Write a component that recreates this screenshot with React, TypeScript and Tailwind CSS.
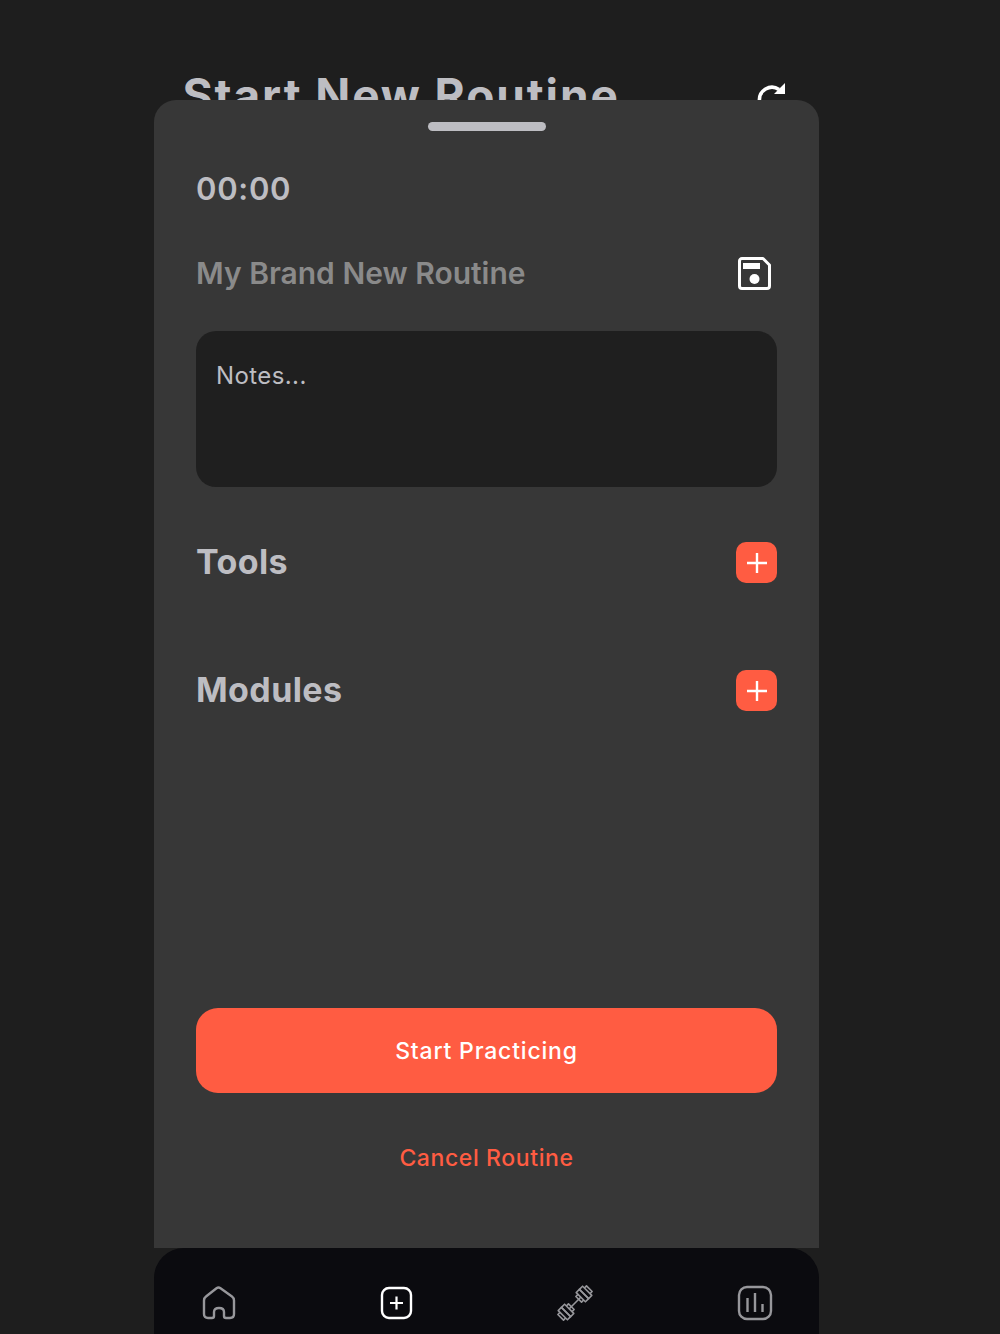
function RefreshIcon() {
  return (
    <svg width="34" height="34" viewBox="0 0 34 34" fill="none">
      <path d="M5.500 21A12.500 12.500 0 0 1 25 9.500" stroke="white" strokeWidth="3.600" />
      <path d="M31 3v11H20Z" fill="white" />
    </svg>
  );
}

function SaveIcon() {
  return (
    <svg width="35" height="35" viewBox="0 0 35 35" fill="none">
      <path d="M5 2.500h21l6.500 6.500v21a2.500 2.500 0 0 1-2.500 2.500H5A2.500 2.500 0 0 1 2.500 30V5A2.500 2.500 0 0 1 5 2.500Z" stroke="white" strokeWidth="3" strokeLinejoin="round" />
      <rect x="6" y="7" width="17" height="6" fill="white" />
      <circle cx="17.500" cy="23" r="5" fill="white" />
    </svg>
  );
}

function HomeIcon() {
  return (
    <svg width="36" height="36" viewBox="0 0 36 36" fill="none" stroke="#97979b" strokeWidth="2.400">
      <path d="M15.500 3.200Q17.500 1.800 19.500 3.200L31 11.500Q33 13 33 15.500V29Q33 33 29 33H25Q23 33 23 31V27Q23 23 18 23Q13 23 13 27V31Q13 33 11 33H7Q3 33 3 29V15.500Q3 13 5 11.500Z" strokeLinejoin="round" />
    </svg>
  );
}

function PlusSquareIcon() {
  return (
    <svg width="34" height="34" viewBox="0 0 34 34" fill="none" stroke="white">
      <rect x="3" y="2" width="29" height="30" rx="7" strokeWidth="2.400" />
      <path d="M17.500 10.500v13M11 17h13" strokeWidth="2.200" />
    </svg>
  );
}

function BarbellIcon() {
  return (
    <svg width="38" height="38" viewBox="0 0 38 38" fill="none" stroke="#97979b" strokeWidth="1.600" strokeLinejoin="round">
      <path d="M13 25 L25 13" />
      <g transform="rotate(45 28 10)">
        <rect x="21.500" y="5.500" width="13" height="4.500" />
        <rect x="21.500" y="10" width="13" height="4.500" />
        <path d="M24 5.500v-3h8v3M24 14.500v3h8v-3" />
      </g>
      <g transform="rotate(45 10 28)">
        <rect x="3.500" y="23.500" width="13" height="4.500" />
        <rect x="3.500" y="28" width="13" height="4.500" />
        <path d="M6 23.500v-3h8v3M6 32.500v3h8v-3" />
      </g>
    </svg>
  );
}

function ChartIcon() {
  return (
    <svg width="36" height="36" viewBox="0 0 36 36" fill="none" stroke="#97979b">
      <rect x="2" y="2" width="32" height="32" rx="8" strokeWidth="2.400" />
      <path d="M10.500 27V13M18 27V8M25.500 27v-8" strokeWidth="2.400" />
    </svg>
  );
}

function AddButton() {
  return (
    <button className="flex h-[41px] w-[41px] items-center justify-center rounded-[10px] bg-[#ff5c42]">
      <svg width="22" height="22" viewBox="0 0 22 22" stroke="white" strokeWidth="2.400">
        <path d="M11 1v20M1 11h20" />
      </svg>
    </button>
  );
}

export default function App() {
  return (
    <div className="h-[1334px] overflow-hidden bg-[#1e1e1e] font-['Inter',sans-serif]">
      <div className="ml-[153.500px] w-[665.500px]">
        {/* header, cut off by the sheet */}
        <div className="flex h-[100px] justify-between overflow-hidden pl-[29px] pr-[31px] pt-[70px]">
          <h1 className="text-[46px] font-bold leading-[50px] tracking-[1.900px] whitespace-nowrap text-[#bdbdc2]">Start New Routine</h1>
          <div className="mt-[10px] shrink-0">
            <RefreshIcon />
          </div>
        </div>

        {/* sheet */}
        <div className="flex h-[1148px] flex-col rounded-t-[22px] bg-[#373737] pl-[42.500px] pr-[42px]">
          <div className="mx-auto mt-[22px] h-[9px] w-[118px] rounded-full bg-[#bdbdc2]" />
          <div className="mt-[40px] text-[31px] font-semibold leading-[36px] tracking-[0.700px] text-[#bdbdc2]">00:00</div>
          <div className="mt-[48px] flex h-[36px] items-center justify-between pr-[5px]">
            <span className="text-[30px] font-semibold text-[#8a8a8a]">My Brand New Routine</span>
            <SaveIcon />
          </div>
          <div className="mt-[40px] h-[156px] rounded-[20px] bg-[#1f1f1f] px-[20px] pt-[30px] text-[24px] leading-[30px] tracking-[0.400px] text-[#bdbdc2]">Notes...</div>
          <div className="mt-[55px] flex h-[41px] items-center justify-between">
            <span className="-mt-[2px] text-[34px] font-bold tracking-[0.400px] text-[#bdbdc2]">Tools</span>
            <AddButton />
          </div>
          <div className="mt-[87px] flex h-[41px] items-center justify-between">
            <span className="-mt-[2px] text-[34px] font-bold tracking-[0.400px] text-[#bdbdc2]">Modules</span>
            <AddButton />
          </div>
          <button className="mt-[297px] h-[85px] rounded-[22px] bg-[#ff5c42] pt-[1px] text-[23px] font-medium tracking-[0.800px] text-white">Start Practicing</button>
          <div className="mt-[50px] text-center text-[23px] font-medium leading-[30px] tracking-[0.600px] text-[#ff5c42]">Cancel Routine</div>
        </div>

        {/* tab bar */}
        <nav className="flex h-[86px] items-start justify-between rounded-t-[30px] bg-[#0b0b0f] pl-[47px] pr-[46px] pt-[37px]">
          <HomeIcon />
          <div className="mt-[1px]">
            <PlusSquareIcon />
          </div>
          <div className="-mt-[1px]">
            <BarbellIcon />
          </div>
          <ChartIcon />
        </nav>
      </div>
    </div>
  );
}
